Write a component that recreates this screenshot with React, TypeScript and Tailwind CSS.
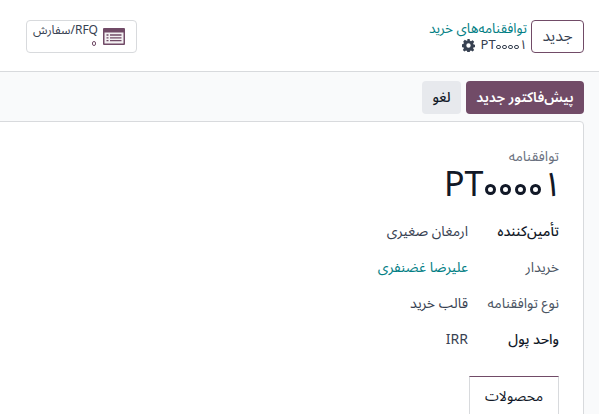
const font = { fontFamily: '"Noto Sans Arabic", Roboto, "DejaVu Sans", sans-serif' };

function Row({ label, value, labelClass, valueClass }: { label: string; value: string; labelClass: string; valueClass: string }) {
  return (
    <div className="flex h-[36px] items-center text-[14px]">
      <div className={`w-[91px] shrink-0 ${labelClass}`}>{label}</div>
      <div className={valueClass}>{value}</div>
    </div>
  );
}

// zero digit is a ring in the original font, the installed ones draw a dot
function Zero({ big, plum }: { big?: boolean; plum?: boolean }) {
  return big ? (
    <span className="mx-[1.900px] inline-block h-[11px] w-[11px] -translate-y-[9px] overflow-hidden rounded-full border-[3px] border-[#111827] text-[1px] leading-none text-transparent">۰</span>
  ) : (
    <span className={`mx-[0.7px] inline-block h-[4.600px] w-[4.600px] -translate-y-[3px] overflow-hidden rounded-full border-[1.300px] text-[1px] leading-none text-transparent ${plum ? "border-[#714b67]" : "border-[#374151]"}`}>۰</span>
  );
}

function Code({ big }: { big?: boolean }) {
  return (
    <span dir="ltr" className={`inline-flex items-baseline ${big ? "-mr-[3px]" : ""}`}>
      <span>PT</span>
      <Zero big={big} />
      <Zero big={big} />
      <Zero big={big} />
      <Zero big={big} />
      <span>۱</span>
    </span>
  );
}

export default function App() {
  return (
    <div dir="rtl" className="h-[414px] w-[599px] overflow-hidden bg-white text-[#374151]" style={font}>
      <header className="flex h-[72px] items-center justify-between border-b border-[#d8dadd] pl-[26px] pr-[15px] pt-[2px]">
        <div className="flex items-center gap-[4px]">
          <button className="flex h-[33px] w-[53px] items-center justify-center rounded border border-[#714b67] text-[15.500px]">جدید</button>
          <div className="flex flex-col text-[13.500px] leading-[17px]">
            <span className="text-[#017e84]">توافقنامه‌های خرید</span>
            <div className="flex items-center gap-[6px] text-[13px]">
              <Code />
              <svg viewBox="0 0 16 16" className="h-[13px] w-[13px] fill-[#374151]">
                <path d="M6.600 0h2.800l.4 2.200 1.300.6 1.900-1.300 2 2-1.300 1.900.6 1.300 2.300.4v2.800l-2.300.4-.6 1.300 1.300 1.900-2 2-1.900-1.300-1.300.6-.4 2.200H6.600l-.4-2.200-1.300-.6-1.900 1.300-2-2 1.300-1.900-.6-1.300-2.300-.4V6.600l2.300-.4.6-1.300L1.500 3l2-2 1.900 1.300 1.300-.6zM8 5.300a2.700 2.700 0 1 0 0 5.400 2.700 2.700 0 0 0 0-5.400z" fillRule="evenodd" />
              </svg>
            </div>
          </div>
        </div>
        <button className="flex h-[33px] w-[111px] items-center rounded border border-[#d8dadd] pr-[11px]">
          <svg viewBox="0 0 22 17" className="h-[17px] w-[22px] shrink-0">
            <rect width="22" height="17" rx="1" fill="#714b67" />
            <rect x="1.500" y="4.500" width="19" height="11" fill="#f3f0f2" />
            <path d="M3.500 7h2M7 7h11.500M3.500 9.800h2M7 9.800h11.500M3.500 12.600h2M7 12.600h11.500" stroke="#714b67" strokeWidth="1.300" />
          </svg>
          <div className="mr-[5px] flex flex-col items-start pt-[2px] text-[12px] leading-[15px] text-[#374151]">
            <span>RFQ/سفارش</span>
            <span className="pr-[1px]"><Zero plum /></span>
          </div>
        </button>
      </header>
      <div className="h-[342px] bg-[#f9fafb]">
        <div className="flex h-[49px] items-center gap-[5px] pr-[15px] pt-[1px]">
          <button className="h-[33px] w-[118px] rounded bg-[#714b67] text-[14px] font-semibold text-white">پیش‌فاکتور جدید</button>
          <button className="h-[33px] w-[39px] rounded bg-[#e7e9ed] text-[14px] font-medium text-[#111827]">لغو</button>
        </div>
        <div className="mr-[15px] h-[300px] w-[600px] rounded-t border border-[#d8dadd] bg-white pr-[24px] pt-[25px]">
          <div className="text-[14px] leading-[19px] text-[#6b7280]">توافقنامه</div>
          <div className="text-[34px] leading-[38px] text-[#111827]"><Code big /></div>
          <div className="mt-[9px]">
            <Row label="تأمین‌کننده" value="ارمغان صغیری" labelClass="font-medium text-[#111827]" valueClass="text-[#374151]" />
            <Row label="خریدار" value="علیرضا غضنفری" labelClass="text-[#4b5563]" valueClass="text-[#017e84]" />
            <Row label="نوع توافقنامه" value="قالب خرید" labelClass="text-[#4b5563]" valueClass="text-[#374151]" />
            <Row label="واحد پول" value="IRR" labelClass="font-medium text-[#111827]" valueClass="text-[#374151]" />
          </div>
          <div className="mt-[19px] flex h-[40px] w-[90px] items-center justify-center border border-b-0 border-[#d8dadd] border-t-[#714b67] text-[14px] text-[#111827]">محصولات</div>
        </div>
      </div>
    </div>
  );
}
